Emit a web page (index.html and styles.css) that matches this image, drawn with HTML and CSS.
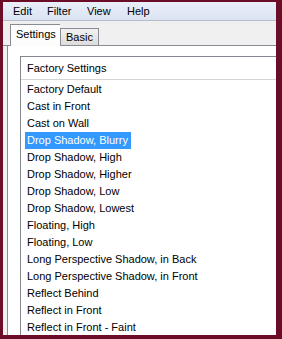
FILE: index.html
```html
<!DOCTYPE html>
<html>
<head>
<meta charset="utf-8">
<link rel="stylesheet" href="styles.css">
</head>
<body>
<div class="window">
  <div class="menubar">
    <span class="menu-item menu-edit">Edit</span>
    <span class="menu-item menu-filter">Filter</span>
    <span class="menu-item menu-view">View</span>
    <span class="menu-item">Help</span>
  </div>
  <div class="tabstrip">
    <div class="tab tab-active">Settings</div>
    <div class="tab tab-basic">Basic</div>
  </div>
  <div class="panel">
    <div class="listbox">
      <div class="list-header">Factory Settings</div>
      <ul class="list">
        <li><span class="item">Factory Default</span></li>
        <li><span class="item">Cast in Front</span></li>
        <li><span class="item">Cast on Wall</span></li>
        <li><span class="item selected">Drop Shadow, Blurry</span></li>
        <li><span class="item">Drop Shadow, High</span></li>
        <li><span class="item">Drop Shadow, Higher</span></li>
        <li><span class="item">Drop Shadow, Low</span></li>
        <li><span class="item">Drop Shadow, Lowest</span></li>
        <li><span class="item">Floating, High</span></li>
        <li><span class="item">Floating, Low</span></li>
        <li><span class="item">Long Perspective Shadow, in Back</span></li>
        <li><span class="item">Long Perspective Shadow, in Front</span></li>
        <li><span class="item">Reflect Behind</span></li>
        <li><span class="item">Reflect in Front</span></li>
        <li><span class="item">Reflect in Front - Faint</span></li>
      </ul>
    </div>
  </div>
</div>
</body>
</html>
```

FILE: styles.css
```css
html, body {
  margin: 0;
  padding: 0;
  background: #6b0c28;
  width: 282px;
  height: 339px;
  overflow: hidden;
}
body {
  font-family: "Liberation Sans", Arial, sans-serif;
  font-size: 11px;
  color: #000;
}
.window {
  margin: 2px 6px 0 3px;
  height: 333px;
  background: #f0f0f0;
  overflow: hidden;
  display: flex;
  flex-direction: column;
}
.menubar {
  height: 18px;
  flex: none;
  background: linear-gradient(#eaeff8, #dbe4f3);
  border-bottom: 1px solid #b6bcc6;
  display: flex;
  align-items: center;
  padding-left: 10px;
}
.menu-item {
  line-height: 18px;
}
.menu-edit { width: 34px; }
.menu-filter { width: 40px; }
.menu-view { width: 40px; }
.tabstrip {
  flex: none;
  height: 24px;
  display: flex;
  align-items: flex-end;
  padding-left: 7px;
  border-bottom: 1px solid #898c95;
}
.tab {
  box-sizing: border-box;
  height: 17px;
  padding: 0 0 0 5px;
  line-height: 16px;
  border: 1px solid #898c95;
  border-bottom: none;
  background: linear-gradient(#f2f2f2, #dcdcdc);
}
.tab-basic {
  width: 39px;
}
.tab-active {
  width: 50px;
  height: 22px;
  line-height: 18px;
  background: #fcfcfc;
  border-right: none;
  padding-left: 5px;
  margin-bottom: -1px;
}
.panel {
  flex: 1;
  background: #fff;
  border-left: 1px solid #898c95;
  margin-left: 4px;
  padding: 10px 0 0 12px;
  overflow: hidden;
}
.listbox {
  border-left: 1px solid #828790;
  border-top: 1px solid #828790;
  height: 100%;
  width: 300px;
}
.list-header {
  height: 22px;
  line-height: 23px;
  padding-left: 6px;
  border-bottom: 1px solid #d5d5d5;
  background: #fff;
}
.list {
  list-style: none;
  margin: 1px 0 0 0;
  padding: 0 0 0 4px;
}
.list li {
  height: 17px;
  line-height: 17px;
}
.item {
  display: inline-block;
  padding: 0 3px 0 2px;
}
.item.selected {
  background: #3399ff;
  color: #fff;
}
```
